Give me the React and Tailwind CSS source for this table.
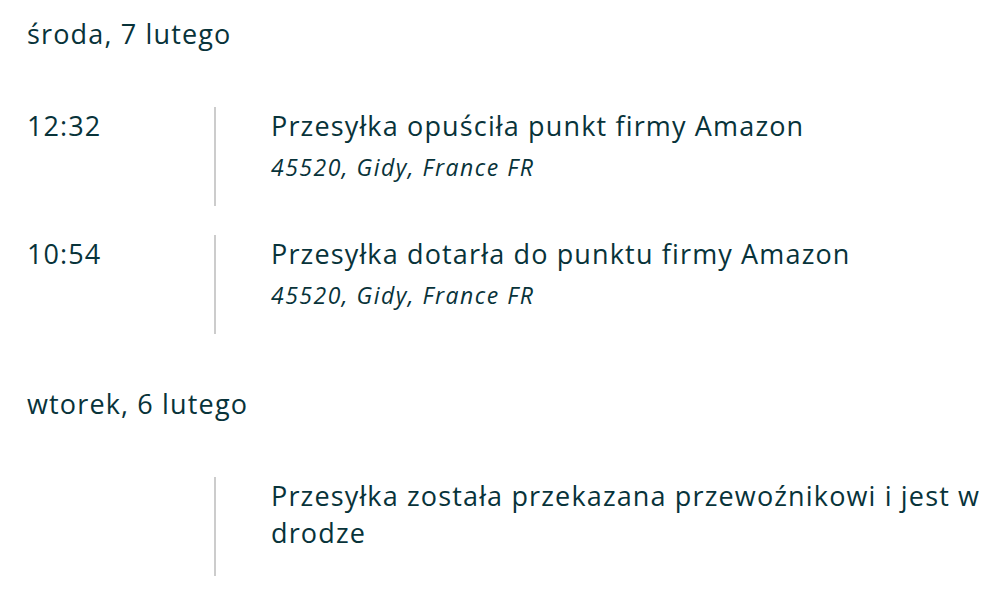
const days = [
  {
    date: 'środa, 7 lutego',
    events: [
      { time: '12:32', title: 'Przesyłka opuściła punkt firmy Amazon', place: '45520, Gidy, France FR' },
      { time: '10:54', title: 'Przesyłka dotarła do punktu firmy Amazon', place: '45520, Gidy, France FR' },
    ],
  },
  {
    date: 'wtorek, 6 lutego',
    events: [
      { time: '', title: 'Przesyłka została przekazana przewoźnikowi i jest w drodze', place: '' },
    ],
  },
]

function EventRow({ event }) {
  return (
    <div className="flex">
      <div className="w-[187px] shrink-0 text-[27px] tracking-[1.1px] leading-[37px]">{event.time}</div>
      <div className="border-l-2 border-[#cccccc] pl-[55px] pb-[22px] min-h-[99px]">
        <div className="text-[27px] tracking-[1.15px] leading-[37px]">{event.title}</div>
        {event.place && (
          <div className="mt-2 text-[23px] tracking-[1.5px] leading-[30px] italic">{event.place}</div>
        )}
      </div>
    </div>
  )
}

export default function App() {
  return (
    <div className="min-h-screen bg-white pl-[27px] pr-[10px] pt-[15px] text-[#08333a]" style={{ fontFamily: '"Open Sans", "Noto Sans", sans-serif' }}>
      <div className="flex flex-col gap-[51px]">
        {days.map(day => (
          <section key={day.date}>
            <h2 className="text-[27px] tracking-[1.15px] leading-[37px] mb-[55px]">{day.date}</h2>
            <div className="flex flex-col gap-[29px]">
              {day.events.map(ev => (
                <EventRow key={ev.title} event={ev} />
              ))}
            </div>
          </section>
        ))}
      </div>
    </div>
  )
}
